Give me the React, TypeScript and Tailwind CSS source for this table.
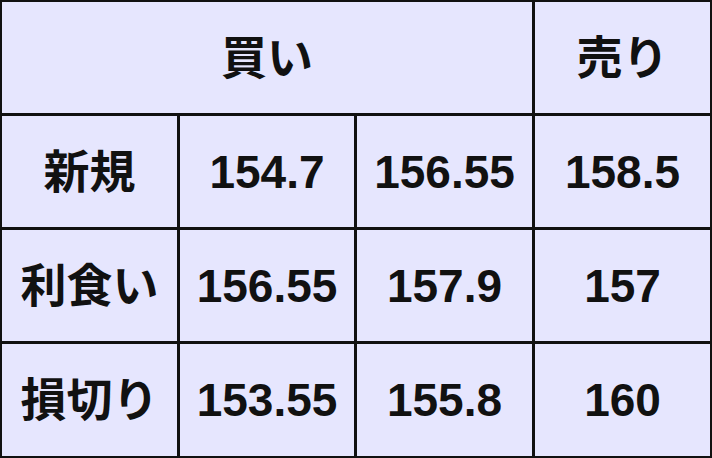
const rows: [string, string, string, string][] = [
  ["新規", "154.7", "156.55", "158.5"],
  ["利食い", "156.55", "157.9", "157"],
  ["損切り", "153.55", "155.8", "160"],
];

function Cell({ children, span }: { children: React.ReactNode; span?: boolean }) {
  return (
    <div
      className={`flex items-center justify-center bg-[#e6e6fe] text-[46px] font-bold text-[#111] ${
        span ? "col-span-3" : ""
      }`}
    >
      {children}
    </div>
  );
}

export default function App() {
  return (
    <div
      className="grid h-[458px] w-[712px] grid-cols-[175px_174px_175px_1fr] grid-rows-[111px_111px_111px_1fr] gap-[3px] border-2 border-[#111] bg-[#111] leading-none"
      style={{ fontFamily: '"Liberation Sans", "Noto Sans CJK JP", sans-serif' }}
    >
      <Cell span>買い</Cell>
      <Cell>売り</Cell>
      {rows.map((r) => r.map((v, i) => <Cell key={r[0] + i}>{v}</Cell>))}
    </div>
  );
}
